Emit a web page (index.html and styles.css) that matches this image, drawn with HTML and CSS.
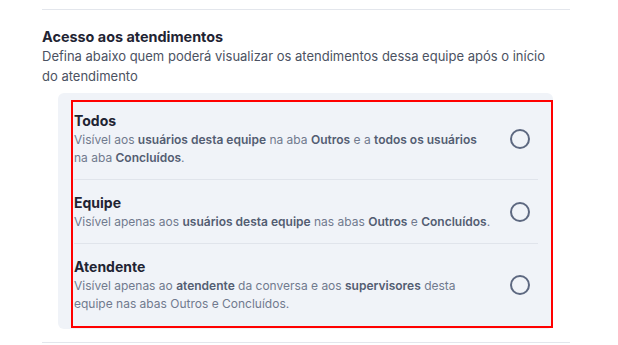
FILE: index.html
```html
<!DOCTYPE html>
<html lang="pt-BR">
<head>
<meta charset="utf-8">
<link rel="stylesheet" href="styles.css">
</head>
<body>
<div class="page">
  <hr class="rule">
  <section class="section">
    <h2 class="heading">Acesso aos atendimentos</h2>
    <p class="lead">Defina abaixo quem poderá visualizar os atendimentos dessa equipe após o início do atendimento</p>
    <div class="card">
      <div class="list">
        <label class="option">
          <div class="text">
            <div class="title">Todos</div>
            <div class="desc">Visível aos <b>usuários desta equipe</b> na aba <b>Outros</b> e a <b>todos os usuários</b> na aba <b>Concluídos</b>.</div>
          </div>
          <span class="radio"></span>
        </label>
        <label class="option">
          <div class="text">
            <div class="title">Equipe</div>
            <div class="desc">Visível apenas aos <b>usuários desta equipe</b> nas abas <b>Outros</b> e <b>Concluídos</b>.</div>
          </div>
          <span class="radio"></span>
        </label>
        <label class="option">
          <div class="text">
            <div class="title">Atendente</div>
            <div class="desc">Visível apenas ao <b>atendente</b> da conversa e aos <b>supervisores</b> desta equipe nas abas Outros e Concluídos.</div>
          </div>
          <span class="radio"></span>
        </label>
      </div>
    </div>
  </section>
  <hr class="rule rule-bottom">
</div>
</body>
</html>
```
FILE: styles.css
```css
* { box-sizing: border-box; }
html, body { margin: 0; padding: 0; background: #fff; }
body { font-family: Inter, "Noto Sans", sans-serif; color: #1f2433; }
.page { padding-top: 9px; }
.rule { border: 0; height: 1px; background: #e3e6ec; margin: 0 0 0 42px; width: 528px; }
.rule-bottom { margin-top: 13px; }
.section { padding: 18px 0 0 42px; }
.heading { margin: 0; font-size: 14.4px; font-weight: 700; line-height: 18px; color: #1f2433; }
.lead { margin: 0; width: 520px; font-size: 13px; line-height: 20px; color: #4b5262; }
.card { margin: 7px 0 0 16px; width: 495px; background: #f0f3f8; border-radius: 6px; padding: 7px 0 1px 13px; }
.list { border: 2px solid #ff0000; padding-left: 1px; }
.option { display: flex; align-items: center; gap: 18px; padding: 13px 8px 12px 0; margin-right: 13px; }
.option:first-child { padding-top: 9px; }
.option:last-child { padding-bottom: 13px; }
.option + .option { border-top: 1px solid #e0e4eb; }
.text { flex: 1; }
.title { font-size: 14px; font-weight: 700; line-height: 20px; color: #1f2433; }
.desc { font-size: 12px; line-height: 18px; color: #707a8e; }
.desc b { font-weight: 600; color: #535d72; }
.radio { flex: none; width: 20px; height: 20px; border: 2px solid #5d6880; border-radius: 50%; }
```
